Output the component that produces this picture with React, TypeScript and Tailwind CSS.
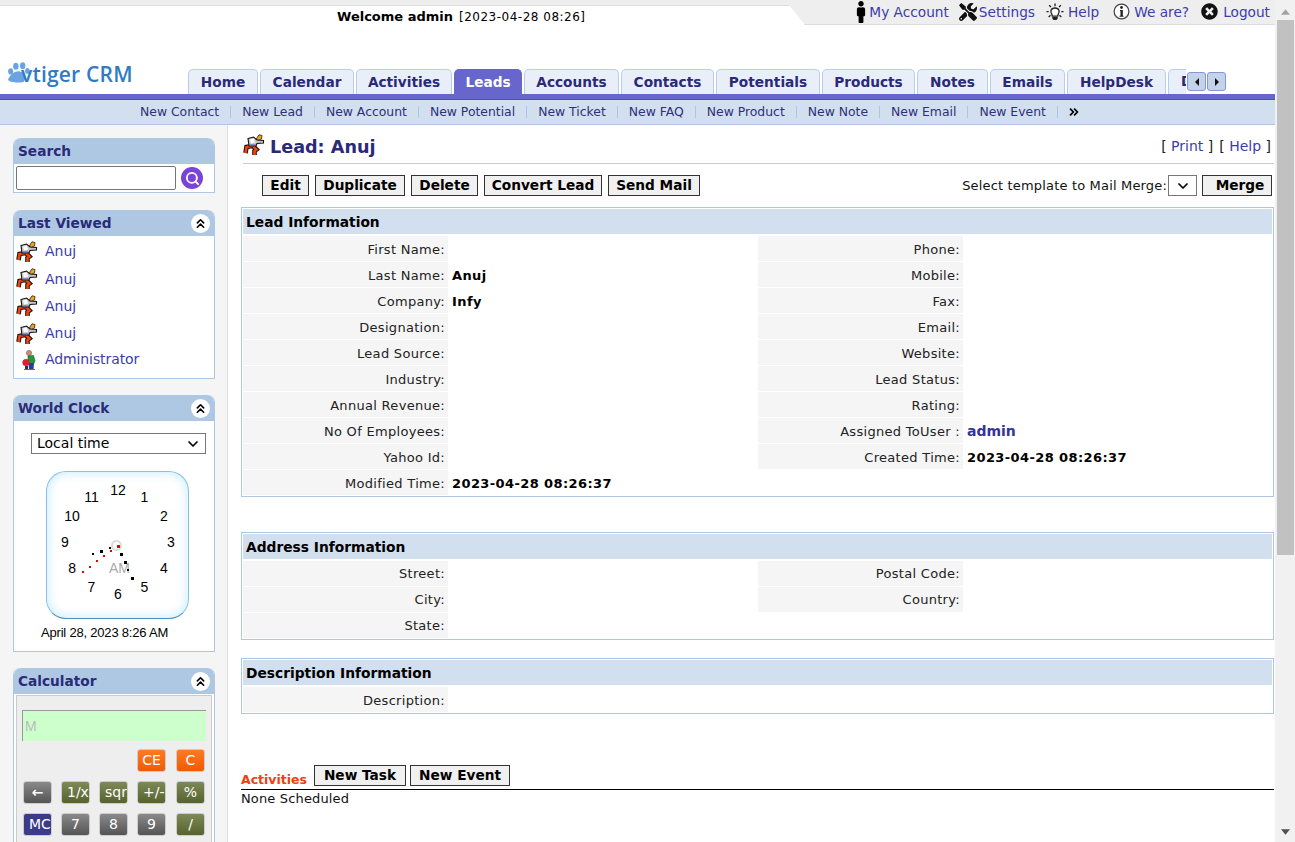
import { ChevronDown, ChevronsUp, Search } from 'lucide-react'
import { FaMale, FaTimesCircle, FaTools } from 'react-icons/fa'

const font = { fontFamily: '"DejaVu Sans", Verdana, sans-serif' }

const tabs = [
  { label: 'Home', w: 'w-[70px]' },
  { label: 'Calendar', w: 'w-[94px]' },
  { label: 'Activities', w: 'w-[96px]' },
  { label: 'Leads', w: 'w-[68px]', active: true },
  { label: 'Accounts', w: 'w-[95px]' },
  { label: 'Contacts', w: 'w-[93px]' },
  { label: 'Potentials', w: 'w-[104px]' },
  { label: 'Products', w: 'w-[93px]' },
  { label: 'Notes', w: 'w-[71px]' },
  { label: 'Emails', w: 'w-[75px]' },
  { label: 'HelpDesk', w: 'w-[99px]' },
]

const quick = ['New Contact', 'New Lead', 'New Account', 'New Potential', 'New Ticket', 'New FAQ', 'New Product', 'New Note', 'New Email', 'New Event']

const leadRows = [
  ['First Name:', '', 'Phone:', ''],
  ['Last Name:', 'Anuj', 'Mobile:', ''],
  ['Company:', 'Infy', 'Fax:', ''],
  ['Designation:', '', 'Email:', ''],
  ['Lead Source:', '', 'Website:', ''],
  ['Industry:', '', 'Lead Status:', ''],
  ['Annual Revenue:', '', 'Rating:', ''],
  ['No Of Employees:', '', 'Assigned ToUser :', 'admin'],
  ['Yahoo Id:', '', 'Created Time:', '2023-04-28 08:26:37'],
  ['Modified Time:', '2023-04-28 08:26:37', '', ''],
]

const addressRows = [
  ['Street:', '', 'Postal Code:', ''],
  ['City:', '', 'Country:', ''],
  ['State:', '', '', ''],
]

const descRows = [['Description:', '', '', '']]

const blackDots = [[120, 162.5, 3], [123.5, 170.5, 3], [127, 178.5, 2], [130.5, 186.5, 3], [108.5, 157, 2], [99.5, 159.5, 3], [91.5, 163, 2]]
const redDots = [[116.5, 154.5, 3], [109.5, 160, 2], [102.5, 165, 2], [95.5, 170, 2], [88.5, 175.5, 2], [81.5, 181, 2]]

function LeadIcon({ className }: { className: string }) {
  const legs = 'M9 12 L3.5 13 L2.5 19 M10 12 L13.5 15.5 L11.5 17 L11.5 21'
  return (
    <svg viewBox="0 0 22 22" className={className}>
      {/* legs */}
      <path d={legs} fill="none" stroke="#111" strokeWidth="4.6" strokeLinejoin="miter" />
      <path d={legs} fill="none" stroke="#f0440c" strokeWidth="2.6" strokeLinejoin="miter" />
      {/* torso and arm */}
      <path d="M5 4.5 L10.5 3 L14 6 L20.5 6.5 L20.5 9 L14 9.5 L13 12 L6 12 Z" fill="#c8c8c8" stroke="#111" strokeWidth="1.1" />
      <path d="M7 5.5 L11 4.5 L12 8.5 L8 9.5 Z" fill="#fff" />
      <path d="M7 10.6 L12.8 10.4 L12.6 11.6 L7 11.6 Z" fill="#3850b8" />
      {/* head */}
      <path d="M13.5 4.5 L16 0.8 L19 1.5 L18.5 5 L15.5 6 Z" fill="#f2a414" stroke="#222" strokeWidth="0.8" />
    </svg>
  )
}

function AdminIcon() {
  return (
    <svg viewBox="0 0 16 20" className="w-[16px] h-[20px] shrink-0">
      <path d="M3 19.5 H14" stroke="#666" strokeWidth="1" />
      <circle cx="8" cy="3" r="2.6" fill="#c98f78" stroke="#7a5a50" strokeWidth="0.6" />
      <path d="M7 6 L12.5 5.5 L14 11 L12.5 14 L7 14 Z" fill="#1f9a3c" stroke="#145a24" strokeWidth="0.6" />
      <path d="M7.5 13 L13 13 L12.5 19 L8 19 Z" fill="#1f3fa8" />
      <circle cx="5" cy="12.5" r="3.6" fill="#e01e30" />
      <path d="M4 16 L7 16 L7 19 L4 19 Z" fill="#333" />
    </svg>
  )
}

function BulbIcon() {
  return (
    <svg viewBox="0 0 20 20" className="w-[18px] h-[18px]" fill="none" stroke="#222" strokeWidth="1.5">
      <path d="M6.5 12.5 C4.5 10 5 5.5 10 5.5 C15 5.5 15.5 10 13.5 12.5 L13 14.5 H7 Z" fill="#fff" />
      <path d="M7 15.5 H13 V17.5 L11.5 19 H8.5 L7 17.5 Z" fill="#222" stroke="none" />
      <path d="M10 0.5 V3.5 M3.5 2.5 L5.5 4.5 M16.5 2.5 L14.5 4.5 M0.5 9.5 H3 M17 9.5 H19.5 M3 15.5 L5 13.5 M17 15.5 L15 13.5" />
    </svg>
  )
}

function InfoIcon() {
  return (
    <svg viewBox="0 0 18 18" className="w-[17px] h-[17px]">
      <circle cx="9" cy="9" r="7.8" fill="#fff" stroke="#444" strokeWidth="1.3" />
      <circle cx="9" cy="4.8" r="1.5" fill="#222" />
      <path d="M7.4 7.5 H10.4 V13.5 H11.2 V14.6 H6.9 V13.5 H7.9 V8.6 H7.4 Z" fill="#222" />
    </svg>
  )
}

function Logo() {
  return (
    <div className="flex items-center ml-[7px] mb-[5px] h-[28px]">
      <svg viewBox="0 0 22 20" className="w-[23px] h-[21px] shrink-0 -mt-[6px]" fill="#6ba3e0">
        <ellipse cx="3.5" cy="9" rx="2.4" ry="3" />
        <ellipse cx="8.5" cy="4" rx="2.6" ry="3.4" />
        <ellipse cx="15" cy="3.6" rx="2.6" ry="3.4" />
        <ellipse cx="19.5" cy="8.5" rx="2.2" ry="2.8" />
        <path d="M1 17 C3 11 9 8 12 9 C17 10 19 15 16 19 C11 20 3 20 1 17 Z" />
      </svg>
      <span className="relative text-[21px] font-semibold text-[#2f7cc4] tracking-[0.2px] ml-[-9px]" style={{ fontFamily: '"Open Sans", sans-serif' }}>
        vtiger CRM
      </span>
    </div>
  )
}

function PanelHead({ title, collapse = true }: { title: string; collapse?: boolean }) {
  return (
    <div className="h-[26px] bg-[#aec8e4] rounded-t-[7px] flex items-center justify-between pl-[4px] pr-[4px]">
      <span className="text-[13.7px] font-bold text-[#2a2a78] mt-[1px]">{title}</span>
      {collapse && (
        <span className="w-[19px] h-[19px] rounded-full bg-white flex items-center justify-center">
          <ChevronsUp size={15} strokeWidth={2.6} className="text-black" />
        </span>
      )}
    </div>
  )
}

function Section({ title, rows, leading = 'leading-[27px]' }: { title: string; rows: string[][]; leading?: string }) {
  return (
    <div className="border border-[#aec8e4] pt-px px-px">
      <div className="h-[25px] bg-[#d2dfef] flex items-center pl-[3px] pt-[2px] text-[13.8px] font-bold text-black mb-[2px]">{title}</div>
      {rows.map((r, i) => (
        <div key={i} className={`grid grid-cols-[205px_310px_205px_1fr] h-[26px] text-[13px] ${leading}`}>
          <div className="bg-[#f5f5f5] h-[25px] text-right pr-[3px] text-[#222] tracking-[0.3px]">{r[0]}</div>
          <div className="pl-[4px] font-bold text-black tracking-[0.4px]">{r[1]}</div>
          {r[2] ? <div className="bg-[#f5f5f5] h-[25px] text-right pr-[3px] text-[#222] tracking-[0.3px]">{r[2]}</div> : <div />}
          <div className={r[3] === 'admin' ? 'pl-[4px] font-bold text-[#33339a] text-[14px]' : 'pl-[4px] font-bold text-black tracking-[0.4px]'}>{r[3]}</div>
        </div>
      ))}
    </div>
  )
}

function CrmButton({ label, className }: { label: string; className: string }) {
  return (
    <button className={`h-[21px] pt-px bg-[#f0f0f0] border border-[#333] text-[13.7px] font-bold text-black leading-none ${className}`}>{label}</button>
  )
}

function CalcKey({ label, tone, left }: { label: string; tone: string; left?: boolean }) {
  return (
    <span className={`w-[29px] h-[23px] shrink-0 rounded-[3px] border border-[#ccc] text-white text-[14px] flex items-center overflow-hidden whitespace-nowrap ${left ? 'justify-start pl-[5px]' : 'justify-center'} ${tone}`}>
      {label}
    </span>
  )
}

const olive = 'bg-linear-to-b from-[#7d8a58] to-[#56632c]'
const grey = 'bg-linear-to-b from-[#8a8a8a] to-[#555]'
const orange = 'bg-linear-to-b from-[#ff7a20] to-[#f05a00]'
const navy = 'bg-[#3b3b8a]'

function Sidebar() {
  return (
    <aside className="w-[228px] shrink-0 bg-[#f5f5f5] border-r border-[#ddd] pl-[13px] pr-[12px] pt-[13px] overflow-hidden">
      <div className="w-[202px] border-x border-b border-[#aec8e4] rounded-t-[7px] bg-white">
        <PanelHead title="Search" collapse={false} />
        <div className="h-[28px] flex items-center pl-[2px]">
          <input className="w-[160px] h-[24px] border border-[#767676] rounded-[2px] bg-white" />
          <span className="ml-[5px] w-[22px] h-[22px] rounded-full bg-[#7a44d8] flex items-center justify-center">
            <Search size={15} strokeWidth={3} className="text-white" />
          </span>
        </div>
      </div>

      <div className="w-[202px] mt-[17px] border-x border-b border-[#aec8e4] rounded-t-[7px] bg-white">
        <PanelHead title="Last Viewed" />
        <div className="h-[142px] pl-[2px] pt-[2px] text-[14px] text-[#3c3caa]">
          {['Anuj', 'Anuj', 'Anuj', 'Anuj'].map((n, i) => (
            <div key={i} className="h-[27.4px] flex items-center">
              <LeadIcon className="w-[22px] h-[22px] shrink-0" />
              <span className="ml-[7px]">{n}</span>
            </div>
          ))}
          <div className="h-[24px] flex items-center pl-[5px]">
            <AdminIcon />
            <span className="ml-[8px] tracking-[-0.1px]">Administrator</span>
          </div>
        </div>
      </div>

      <div className="w-[202px] mt-[16px] border-x border-b border-[#aec8e4] rounded-t-[7px] bg-white">
        <PanelHead title="World Clock" />
        <div className="h-[230px] pt-[12px] flex flex-col">
          <div className="ml-[17px] w-[175px] h-[21px] border border-[#777] flex items-center justify-between pl-[5px] pr-[4px] text-[14px] text-black">
            Local time
            <ChevronDown size={16} strokeWidth={2.6} />
          </div>
          <div className="relative ml-[32px] mt-[17px] w-[143px] h-[148px] rounded-[20px] border border-[#8cc0e4] border-b-[#4a90c8] bg-white shadow-[inset_0_0_12px_#bfeaff]" style={{ fontFamily: '"Liberation Sans", sans-serif' }}>
            {Array.from({ length: 12 }, (_, i) => {
              const a = ((i + 1) * Math.PI) / 6
              return (
                <span
                  key={i}
                  className="absolute -translate-x-1/2 -translate-y-1/2 text-[14px] leading-none text-black"
                  style={{ left: 71 + 53 * Math.sin(a), top: 70 - 52 * Math.cos(a) }}
                >
                  {i + 1}
                </span>
              )
            })}
            <span className="absolute left-[62px] top-[89px] text-[14px] leading-none text-[#aaa]">AM</span>
            <span className="absolute left-[64px] top-[68px] w-[11px] h-[11px] rounded-full border-2 border-[#ddd]" />
            {blackDots.map(([x, y, s], i) => (
              <span key={i} className="absolute bg-black" style={{ left: x - 47, top: y - 82, width: s, height: s }} />
            ))}
            {redDots.map(([x, y, s], i) => (
              <span key={i} className="absolute bg-[#f00000]" style={{ left: x - 47, top: y - 82, width: s, height: s }} />
            ))}
          </div>
          <div className="mt-[4px] ml-[27px] text-[13px] tracking-[-0.2px] text-black whitespace-nowrap" style={{ fontFamily: '"Liberation Sans", sans-serif' }}>
            April 28, 2023 8:26 AM
          </div>
        </div>
      </div>

      <div className="w-[202px] mt-[16px] border-x border-[#aec8e4] rounded-t-[7px] bg-white">
        <PanelHead title="Calculator" />
        <div className="mx-[2px] mt-px h-[160px] bg-[#eee] border border-[#ccc] px-[5px] pt-[14px]">
          <div className="h-[31px] bg-[#ccffcc] border-t border-l border-[#999] text-[#bbb] text-[14px] pl-[2px] flex items-center" style={{ fontFamily: '"Liberation Sans", sans-serif' }}>M</div>
          <div className="flex justify-end gap-[10px] mt-[8px] pr-[1px]">
            <CalcKey label="CE" tone={orange} />
            <CalcKey label="C" tone={orange} />
          </div>
          <div className="flex gap-[9px] mt-[9px] pl-[1px]">
            <CalcKey label="←" tone={`${grey} font-bold`} />
            <CalcKey label="1/x" tone={olive} left />
            <CalcKey label="sqrt" tone={olive} left />
            <CalcKey label="+/-" tone={olive} left />
            <span className="ml-px"><CalcKey label="%" tone={olive} /></span>
          </div>
          <div className="flex gap-[9px] mt-[9px] pl-[1px]">
            <CalcKey label="MC" tone={navy} left />
            <CalcKey label="7" tone={grey} />
            <CalcKey label="8" tone={grey} />
            <CalcKey label="9" tone={grey} />
            <span className="ml-px"><CalcKey label="/" tone={olive} /></span>
          </div>
        </div>
      </div>
    </aside>
  )
}

export default function App() {
  return (
    <div className="w-[1295px] h-[842px] flex overflow-hidden bg-white" style={font}>
      <div className="w-[1275px] h-full flex flex-col">
        {/* Top strip */}
        <div className="h-[69px] shrink-0 relative">
          <div className="h-[6px] bg-[#eee] border-b border-[#ddd]" />
          <div className="absolute right-0 top-0 h-[25px] w-[490px] bg-[#eee] border-b border-[#ddd] [clip-path:polygon(0_0,100%_0,100%_100%,20px_100%)] flex items-center justify-end pr-[5px] gap-[9px] text-[13.7px] text-[#3c3caa]">
            <span className="flex items-center"><FaMale size={22} className="text-black -mr-[2px]" /><span className="ml-[-1px]">My Account</span></span>
            <span className="flex items-center gap-[2px] ml-px"><FaTools size={18} className="text-[#111]" />Settings</span>
            <span className="flex items-center gap-[4px] ml-[2px]"><BulbIcon />Help</span>
            <span className="flex items-center gap-[4px] ml-[5px]"><InfoIcon />We are?</span>
            <span className="flex items-center gap-[5px] ml-[3px]"><FaTimesCircle size={17} className="text-[#111]" />Logout</span>
          </div>
          <div className="absolute left-[337px] top-[7px] text-[13px] text-black whitespace-nowrap">
            <span className="font-bold">Welcome admin</span>
            <span className="ml-[6px] text-[12px] tracking-[0.5px]">[2023-04-28 08:26]</span>
          </div>
        </div>

        {/* Logo and tabs */}
        <div className="h-[25px] shrink-0 flex items-end relative">
          <div className="w-[188px] shrink-0 self-end">
            <Logo />
          </div>
          <div className="flex gap-[2px] w-[998px] overflow-hidden">
            {tabs.map(t => (
              <div
                key={t.label}
                className={`${t.w} shrink-0 h-[25px] rounded-t-[5px] border border-b-0 flex items-center justify-center text-[13.7px] font-bold ${t.active ? 'bg-[#6666cc] border-[#6666cc] text-white' : 'bg-[#e9eff9] border-[#b9cde8] text-[#2a2a78]'}`}
              >
                {t.label}
              </div>
            ))}
            <div className="w-[40px] shrink-0 h-[25px] rounded-t-[5px] border border-b-0 bg-[#e9eff9] border-[#b9cde8] text-[13.7px] leading-[23px] font-bold text-[#2a2a78] pl-[12px]">D</div>
          </div>
          <div className="absolute left-[1187px] top-[3px] flex gap-px">
            {['M7 2 L3 6 L7 10 Z', 'M3 2 L7 6 L3 10 Z'].map(d => (
              <span key={d} className="w-[19px] h-[19px] rounded-[3px] bg-[#c3d4ea] border border-[#8a94d8] flex items-center justify-center">
                <svg viewBox="0 0 10 12" className="w-[10px] h-[12px]"><path d={d} fill="#111" /></svg>
              </span>
            ))}
          </div>
        </div>
        <div className="h-[6px] shrink-0 bg-[#6666cc] border-b border-[#5050b4]" />

        {/* Quick create bar */}
        <div className="h-[25px] shrink-0 bg-[#d2dfef] border-b border-[#aec8e4] flex items-center pl-[140px] text-[12.4px] text-[#2f2f78]">
          {quick.map(q => (
            <span key={q} className="flex items-center">
              {q}
              <span className="w-px h-[12px] bg-[#aec8e4] mx-[11px]" />
            </span>
          ))}
          <ChevronsUp size={14} strokeWidth={3} className="rotate-90 text-black -ml-[2px]" />
        </div>

        <div className="flex-1 flex min-h-0">
          <Sidebar />
          <main className="flex-1 pl-[13px] pr-[1px] overflow-hidden">
            <div className="h-[39px] border-b border-[#ccc] flex items-center justify-between pr-[3px] ml-[2px]">
              <div className="flex items-center gap-[5px] mt-[3px]">
                <LeadIcon className="w-[22px] h-[22px]" />
                <span className="text-[17.6px] font-bold text-[#2a2a78] mt-[3px]">Lead: Anuj</span>
              </div>
              <div className="text-[14px] text-[#222] mt-[4px] flex gap-[6px]">
                <span>[ <span className="text-[#3c3caa]">Print</span> ]</span>
                <span>[ <span className="text-[#3c3caa]">Help</span> ]</span>
              </div>
            </div>
            <div className="flex items-center h-[21px] mt-[11px] mb-[11px] pl-[21px] pr-[2px]">
              <CrmButton label="Edit" className="w-[47px]" />
              <CrmButton label="Duplicate" className="w-[90px] ml-[6px]" />
              <CrmButton label="Delete" className="w-[67px] ml-[6px]" />
              <CrmButton label="Convert Lead" className="w-[118px] ml-[6px]" />
              <CrmButton label="Send Mail" className="w-[92px] ml-[6px]" />
              <span className="ml-auto text-[13px] text-[#111] tracking-[0.17px] mt-px">Select template to Mail Merge:</span>
              <span className="w-[29px] h-[21px] border border-[#777] flex items-center justify-center ml-px">
                <ChevronDown size={16} strokeWidth={2.6} />
              </span>
              <CrmButton label="Merge" className="w-[70px] ml-[5px] pl-[6px]" />
            </div>
            <Section title="Lead Information" rows={leadRows} />
            <div className="h-[35px]" />
            <Section title="Address Information" rows={addressRows} leading="leading-[25px]" />
            <div className="h-[18px]" />
            <Section title="Description Information" rows={descRows} />
            <div className="mt-[51px] h-[25px] border-b border-black flex items-end pb-[1px]">
              <span className="w-[73px] shrink-0 text-[12.5px] font-bold text-[#f04010] mb-[-2px]">Activities</span>
              <CrmButton label="New Task" className="w-[92px] mb-[2px]" />
              <CrmButton label="New Event" className="w-[100px] ml-[4px] mb-[2px]" />
            </div>
            <div className="text-[13px] text-[#111] tracking-[0.15px] -mt-px">None Scheduled</div>
          </main>
        </div>
      </div>

      {/* Scrollbar */}
      <div className="w-[20px] h-full bg-[#f1f1f1] flex flex-col items-center relative">
        <svg viewBox="0 0 10 6" className="w-[9px] h-[6px] mt-[9px]"><path d="M5 0 L10 6 H0 Z" fill="#a3a3a3" /></svg>
        <div className="w-[17px] h-[535px] bg-[#c1c1c1] mt-[5px]" />
        <svg viewBox="0 0 10 6" className="absolute bottom-[7px] w-[9px] h-[6px]"><path d="M0 0 H10 L5 6 Z" fill="#505050" /></svg>
      </div>
    </div>
  )
}
